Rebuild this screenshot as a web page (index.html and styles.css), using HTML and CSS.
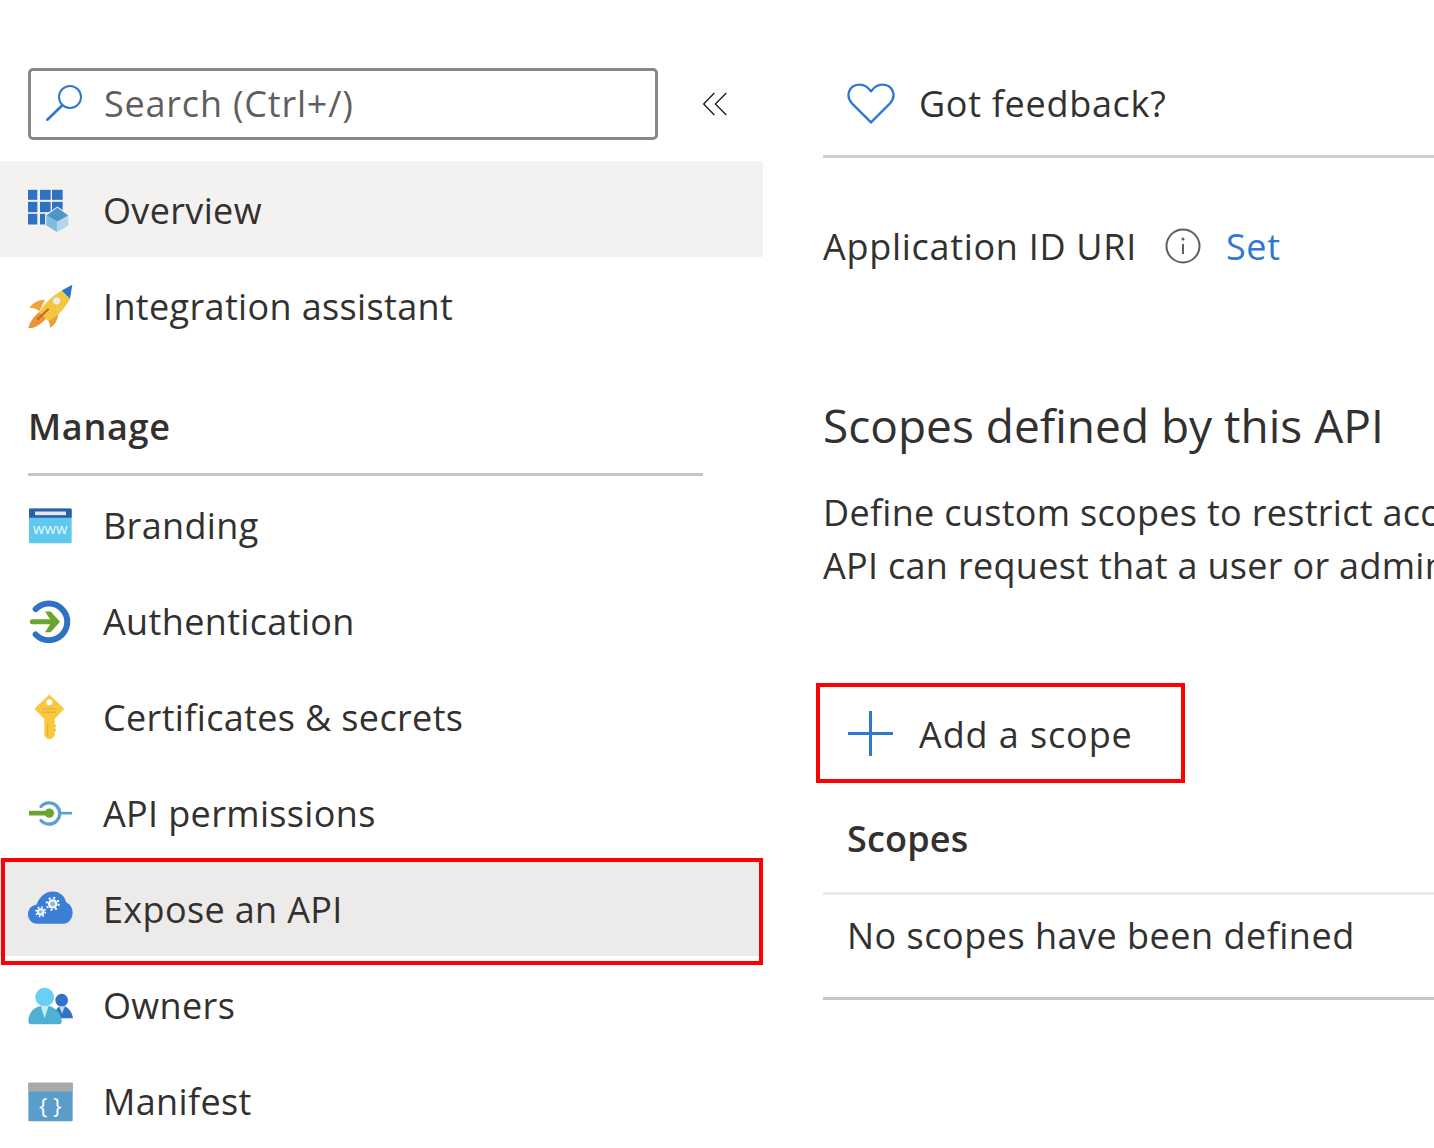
FILE: index.html
```html
<!DOCTYPE html>
<html lang="en">

<head>
    <meta charset="UTF-8">
    <title>Expose an API</title>
    <link rel="stylesheet" href="styles.css">
</head>

<body>
    <nav class="sidebar">
        <div class="search_row">
            <div class="search_box">
                <svg class="search_icon" viewBox="136 76 114 114"><circle cx="208" cy="115" r="33" fill="none" stroke="#2f78d0" stroke-width="6"/><path d="M185 140L140 183" stroke="#2f78d0" stroke-width="8" stroke-linecap="round"/></svg>
                <span>Search (Ctrl+/)</span>
            </div>
            <svg class="collapse_icon" viewBox="70 100 70 70"><path d="M103 103L72 135L103 167M138 103L106 135L138 167" fill="none" stroke="#111" stroke-width="3.5"/></svg>
        </div>

        <a class="nav_item nav_item_active">
            <svg class="nav_icon" viewBox="84 379.5 135 135">
                <g fill="#2f72c4">
                    <rect x="84" y="388" width="28" height="30"/><rect x="120" y="388" width="32" height="30"/><rect x="156" y="388" width="32" height="30"/>
                    <rect x="84" y="424" width="28" height="31"/><rect x="120" y="424" width="32" height="31"/><rect x="156" y="424" width="32" height="31"/>
                    <rect x="84" y="460" width="28" height="32"/><rect x="120" y="460" width="16" height="32"/>
                </g>
                <path d="M172 438L208 462V498L172 518L136 498V462Z" fill="#f3f2f1"/>
                <path d="M172 441L205 465L172 484L139 465Z" fill="#5195c8"/>
                <path d="M139 465L172 484V515L139 495Z" fill="#7fbbe0"/>
                <path d="M205 465L172 484V515L205 495Z" fill="#b4d7ec"/>
            </svg>
            <span>Overview</span>
        </a>
        <a class="nav_item">
            <svg class="nav_icon" viewBox="84 667.5 135 135">
                <path d="M135 718C115 718 98 728 88 742C100 742 110 745 118 752Z" fill="#f0a23c"/>
                <path d="M175 757C175 775 165 795 150 802C150 790 147 780 140 772Z" fill="#eb9c3c"/>
                <path d="M125 750L142 770C125 790 105 803 85 805C87 785 105 762 125 750Z" fill="#e9963a"/>
                <path d="M185 690L210 715C195 745 170 770 145 782L118 755C130 730 160 705 185 690Z" fill="#f5c63f"/>
                <path d="M185 690L217 673L210 715Z" fill="#2f72c8"/>
                <circle cx="170" cy="721" r="11" fill="#ececec"/>
                <path d="M146 745L112 778" stroke="#c9622b" stroke-width="6"/>
            </svg>
            <span>Integration assistant</span>
        </a>

        <h2 class="nav_heading">Manage</h2>

        <a class="nav_item">
            <svg class="nav_icon" viewBox="84 34.5 135 135">
                <rect x="87" y="54" width="128" height="104" rx="4" fill="#5fc8ee"/>
                <path d="M87 82V58Q87 54 91 54H211Q215 54 215 58V82Z" fill="#2a5fa8"/>
                <rect x="105" y="63" width="93" height="11" fill="#e6e6e6"/>
                <text x="151" y="130" class="www_text">www</text>
            </svg>
            <span>Branding</span>
        </a>
        <a class="nav_item">
            <svg class="nav_icon" viewBox="84 322.5 135 135">
                <path d="M107 356A55 55 0 1 1 107 432" fill="none" stroke="#2f72c4" stroke-width="18" stroke-linecap="round"/>
                <path d="M97 394H160" stroke="#6ba52f" stroke-width="15" stroke-linecap="round"/>
                <path d="M135 363H152L180 394L152 425H135L155 394Z" fill="#6ba52f"/>
            </svg>
            <span>Authentication</span>
        </a>
        <a class="nav_item">
            <svg class="nav_icon" viewBox="84 610.5 135 135">
                <path d="M148 615L190 655L162 685V700L167 706L162 712L167 718L162 724V735L148 749L135 735V685L106 655Z" fill="#f8c83e" stroke="#f8c83e" stroke-width="4" stroke-linejoin="round"/>
                <circle cx="148" cy="635" r="9" fill="#fff"/>
                <path d="M127 655H170M127 665H170" stroke="#efa532" stroke-width="3"/>
                <path d="M143 700V735" stroke="#efa532" stroke-width="3"/>
            </svg>
            <span>Certificates &amp; secrets</span>
        </a>
        <a class="nav_item">
            <svg class="nav_icon" viewBox="84 898.5 135 135">
                <path d="M123 948A32 32 0 1 1 123 990" fill="none" stroke="#5ba3cf" stroke-width="10" stroke-linecap="round"/>
                <path d="M180 968H216" stroke="#5ba3cf" stroke-width="8"/>
                <path d="M87 968H140" stroke="#6ba52f" stroke-width="14"/>
                <circle cx="148" cy="968" r="14" fill="#6ba52f"/>
            </svg>
            <span>API permissions</span>
        </a>
        <a class="nav_item nav_item_selected">
            <svg class="nav_icon" viewBox="84 106.5 135 135">
                <path d="M110 220C95 220 84 205 84 192C84 175 95 165 110 162C118 140 135 123 158 123C180 123 195 138 198 155C210 160 218 172 218 186C218 205 205 220 190 220Z" fill="#3b7ed6"/>
                <circle cx="158" cy="160" r="14" fill="#fff"/>
                <circle cx="158" cy="160" r="18" fill="none" stroke="#fff" stroke-width="6" stroke-dasharray="6 8.1"/>
                <circle cx="158" cy="160" r="8" fill="#9db8d6"/>
                <circle cx="122" cy="184" r="11" fill="#fff"/>
                <circle cx="122" cy="184" r="14" fill="none" stroke="#fff" stroke-width="5" stroke-dasharray="5 6"/>
                <circle cx="122" cy="184" r="6" fill="#9db8d6"/>
            </svg>
            <span>Expose an API</span>
        </a>
        <a class="nav_item">
            <svg class="nav_icon" viewBox="84 394.5 135 135">
                <circle cx="185" cy="449" r="19" fill="#2f72c8"/>
                <path d="M160 503C165 478 175 466 185 466C200 466 215 480 219 503Z" fill="#2f72c8"/>
                <path d="M177 467H195L186 490Z" fill="#bcd9ef"/>
                <circle cx="134" cy="440" r="28" fill="#68d0f0"/>
                <path d="M85 512C85 485 105 465 134 465C165 465 185 490 185 512Q185 521 177 521H93Q85 521 85 512Z" fill="#4fb0d4"/>
                <path d="M122 466H146L134 503Z" fill="#c8ecf7"/>
            </svg>
            <span>Owners</span>
        </a>
        <a class="nav_item">
            <svg class="nav_icon" viewBox="84 682.5 135 135">
                <rect x="85" y="697" width="133" height="115" rx="3" fill="#5a9dc8"/>
                <path d="M85 723V700Q85 697 88 697H215Q218 697 218 700V723Z" fill="#a8a8a8"/>
                <text x="151" y="791" class="brace_text">{ }</text>
            </svg>
            <span>Manifest</span>
        </a>
    </nav>

    <main class="content">
        <div class="toolbar">
            <a class="command feedback">
                <svg class="heart_icon" viewBox="500 58 146 129"><path d="M573 180L515 122C495 100 505 65 540 65C555 65 565 75 573 85C581 75 591 65 606 65C641 65 651 100 631 122Z" fill="none" stroke="#2f78d0" stroke-width="7"/></svg>
                <span>Got feedback?</span>
            </a>
        </div>

        <div class="uri_row">
            <span>Application ID URI</span>
            <svg class="info_icon" viewBox="0 0 36 36"><circle cx="18" cy="18" r="16.5" fill="none" stroke="#605e5c" stroke-width="2"/><path d="M18 16V26" stroke="#605e5c" stroke-width="2"/><circle cx="18" cy="11" r="1.5" fill="#605e5c"/></svg>
            <a class="link">Set</a>
        </div>

        <h1 class="section_title">Scopes defined by this API</h1>
        <p class="section_text">Define custom scopes to restrict access to data and functionality protected by the API.<br>API can request that a user or admin consent to one of these scopes.</p>

        <a class="command add_scope">
            <svg class="plus_icon" viewBox="0 0 45 45"><path d="M22.5 0V45M0 22.5H45" stroke="#2f78d0" stroke-width="3"/></svg>
            <span>Add a scope</span>
        </a>

        <div class="table_head">Scopes</div>
        <div class="table_empty">No scopes have been defined</div>
    </main>
</body>

</html>
```

FILE: styles.css
```css
*{
    padding: 0px;
    margin: 0px;
    box-sizing: border-box;
    font-family: "Open Sans", "Noto Sans", sans-serif;
}

body{
    width: 1434px;
    height: 1148px;
    overflow: hidden;
    display: flex;
    background-color: white;
    color: #323130;
    font-size: 36px;
}

.sidebar{
    width: 763px;
    flex-shrink: 0;
    padding-top: 68px;
}

.search_row{
    display: flex;
    align-items: center;
    gap: 45px;
    padding-left: 28px;
    margin-bottom: 21px;
}

.search_box{
    width: 630px;
    height: 72px;
    border: 3px solid #8a8886;
    border-radius: 5px;
    display: flex;
    align-items: center;
    gap: 20px;
    padding: 0px 0px 2px 15px;
    color: #605e5c;
    letter-spacing: 0.8px;
}

.search_icon{
    width: 38px;
    height: 38px;
}

.collapse_icon{
    width: 24px;
    height: 24px;
}

.nav_item{
    height: 96px;
    display: flex;
    align-items: center;
    gap: 30px;
    padding-left: 28px;
    position: relative;
    letter-spacing: 0.35px;
}

.nav_item span{
    position: relative;
    top: 1px;
}

.nav_item_active{
    background-color: #f3f2f1;
}

.nav_item_selected{
    background-color: #edebe9;
}

.nav_item_selected::after{
    content: "";
    position: absolute;
    left: 1px;
    right: 0px;
    top: -2px;
    bottom: -9px;
    border: 4px solid #ff0000;
}

.nav_icon{
    width: 45px;
    height: 45px;
    flex-shrink: 0;
}

.www_text{
    font-size: 44px;
    fill: #e8f8ff;
    text-anchor: middle;
}

.brace_text{
    font-size: 66px;
    fill: white;
    text-anchor: middle;
}

.nav_heading{
    margin: 24px 60px 0px 28px;
    height: 99px;
    padding-top: 25px;
    border-bottom: 3px solid #c8c6c4;
    font-size: 36px;
    font-weight: 600;
    letter-spacing: 0.7px;
}

.content{
    flex: 1;
    min-width: 0;
    margin-left: 60px;
    padding-top: 52px;
}

.toolbar{
    height: 106px;
    border-bottom: 3px solid #d2d0ce;
    display: flex;
    align-items: center;
    padding-left: 24px;
}

.command{
    display: flex;
    align-items: center;
    letter-spacing: 0.7px;
}

.feedback{
    gap: 24px;
}

.heart_icon{
    width: 48px;
    height: 43px;
}

.uri_row{
    display: flex;
    align-items: center;
    margin-top: 62px;
    height: 52px;
    white-space: nowrap;
    letter-spacing: 0.7px;
}

.info_icon{
    width: 36px;
    height: 36px;
    margin: 0px 25px 0px 28px;
}

.link{
    color: #2f78d0;
}

.section_title{
    margin-top: 122px;
    font-size: 46px;
    font-weight: 400;
    line-height: 62px;
    white-space: nowrap;
}

.section_text{
    margin-top: 30px;
    line-height: 53px;
    white-space: nowrap;
    overflow: hidden;
    letter-spacing: 0.3px;
}

.add_scope{
    width: 369px;
    height: 100px;
    margin: 91px 0px 0px -7px;
    padding-left: 28px;
    border: 4px solid #ff0000;
    gap: 26px;
    letter-spacing: 0.9px;
}

.add_scope span{
    position: relative;
    top: 1px;
}

.plus_icon{
    width: 45px;
    height: 45px;
}

.table_head{
    height: 112px;
    padding: 31px 0px 0px 24px;
    border-bottom: 3px solid #edebe9;
    font-weight: 600;
    letter-spacing: 0.2px;
}

.table_empty{
    height: 105px;
    padding: 16px 0px 0px 24px;
    border-bottom: 3px solid #c8c6c4;
    white-space: nowrap;
    letter-spacing: 0.5px;
}
```
